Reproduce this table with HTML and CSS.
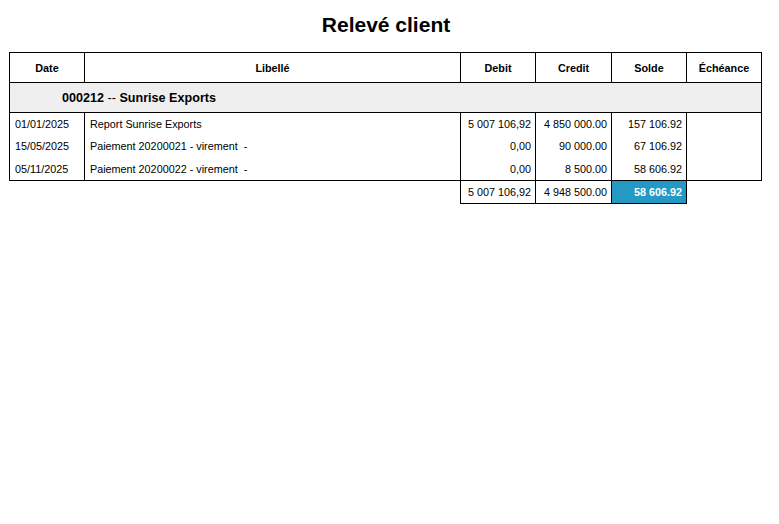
FILE: index.html
```html
<!DOCTYPE html>
<html lang="fr">
<head>
<meta charset="utf-8">
<title>Relevé client</title>
<link rel="stylesheet" href="styles.css">
</head>
<body>
<h1 class="title">Relevé client</h1>
<table class="statement">
  <colgroup>
    <col class="c-date"><col class="c-label"><col class="c-num"><col class="c-num2"><col class="c-num"><col class="c-num">
  </colgroup>
  <thead>
    <tr class="head">
      <th>Date</th><th>Libellé</th><th>Debit</th><th>Credit</th><th>Solde</th><th>Échéance</th>
    </tr>
  </thead>
  <tbody>
    <tr class="group">
      <td colspan="6"><span class="code">000212</span> <span class="sep">--</span> <span class="code">Sunrise Exports</span></td>
    </tr>
    <tr class="row first">
      <td>01/01/2025</td><td>Report Sunrise Exports</td><td class="num">5 007 106,92</td><td class="num">4 850 000.00</td><td class="num">157 106.92</td><td></td>
    </tr>
    <tr class="row">
      <td>15/05/2025</td><td>Paiement 20200021 - virement &nbsp;-</td><td class="num">0,00</td><td class="num">90 000.00</td><td class="num">67 106.92</td><td></td>
    </tr>
    <tr class="row last">
      <td>05/11/2025</td><td>Paiement 20200022 - virement &nbsp;-</td><td class="num">0,00</td><td class="num">8 500.00</td><td class="num">58 606.92</td><td></td>
    </tr>
    <tr class="total">
      <td class="blank"></td><td class="blank"></td><td class="num">5 007 106,92</td><td class="num">4 948 500.00</td><td class="num balance">58 606.92</td><td class="blank"></td>
    </tr>
  </tbody>
</table>
</body>
</html>
```
FILE: styles.css
```css
html, body {
  margin: 0;
  padding: 0;
  background: #fff;
}
body {
  font-family: "Liberation Sans", Arial, sans-serif;
  color: #000;
  padding: 0 9px;
}
.title {
  margin: 0;
  padding: 13px 7px 0 0;
  height: 52px;
  box-sizing: border-box;
  text-align: center;
  font-size: 21px;
  font-weight: bold;
  line-height: 24px;
}
.statement {
  border-collapse: collapse;
  table-layout: fixed;
  width: 753px;
  font-size: 10.8px;
}
.c-date { width: 75px; }
.c-label { width: 376px; }
.c-num { width: 75px; }
.c-num2 { width: 76px; }
.head th {
  border: 1px solid #000;
  height: 29px;
  padding: 0 2px;
  font-weight: bold;
  font-size: 10.8px;
  text-align: center;
}
.group td {
  border: 1px solid #000;
  background: #efefef;
  height: 29px;
  padding: 0 0 0 52px;
  font-size: 12.6px;
  font-weight: bold;
  text-align: left;
}
.group .sep {
  font-weight: normal;
}
.row td {
  border-left: 1px solid #000;
  border-right: 1px solid #000;
  height: 22px;
  padding: 0 4px 0 5px;
  vertical-align: middle;
  white-space: pre;
}
.row.last td {
  border-bottom: 1px solid #000;
  height: 23px;
}
.num {
  text-align: right;
}
.total td {
  height: 22px;
  padding: 0 4px 0 2px;
  white-space: nowrap;
}
.total td.num {
  border: 1px solid #000;
}
.total td.blank {
  border: none;
}
.total td.balance {
  background: #2399c3;
  color: #fff;
  font-weight: bold;
}
```
